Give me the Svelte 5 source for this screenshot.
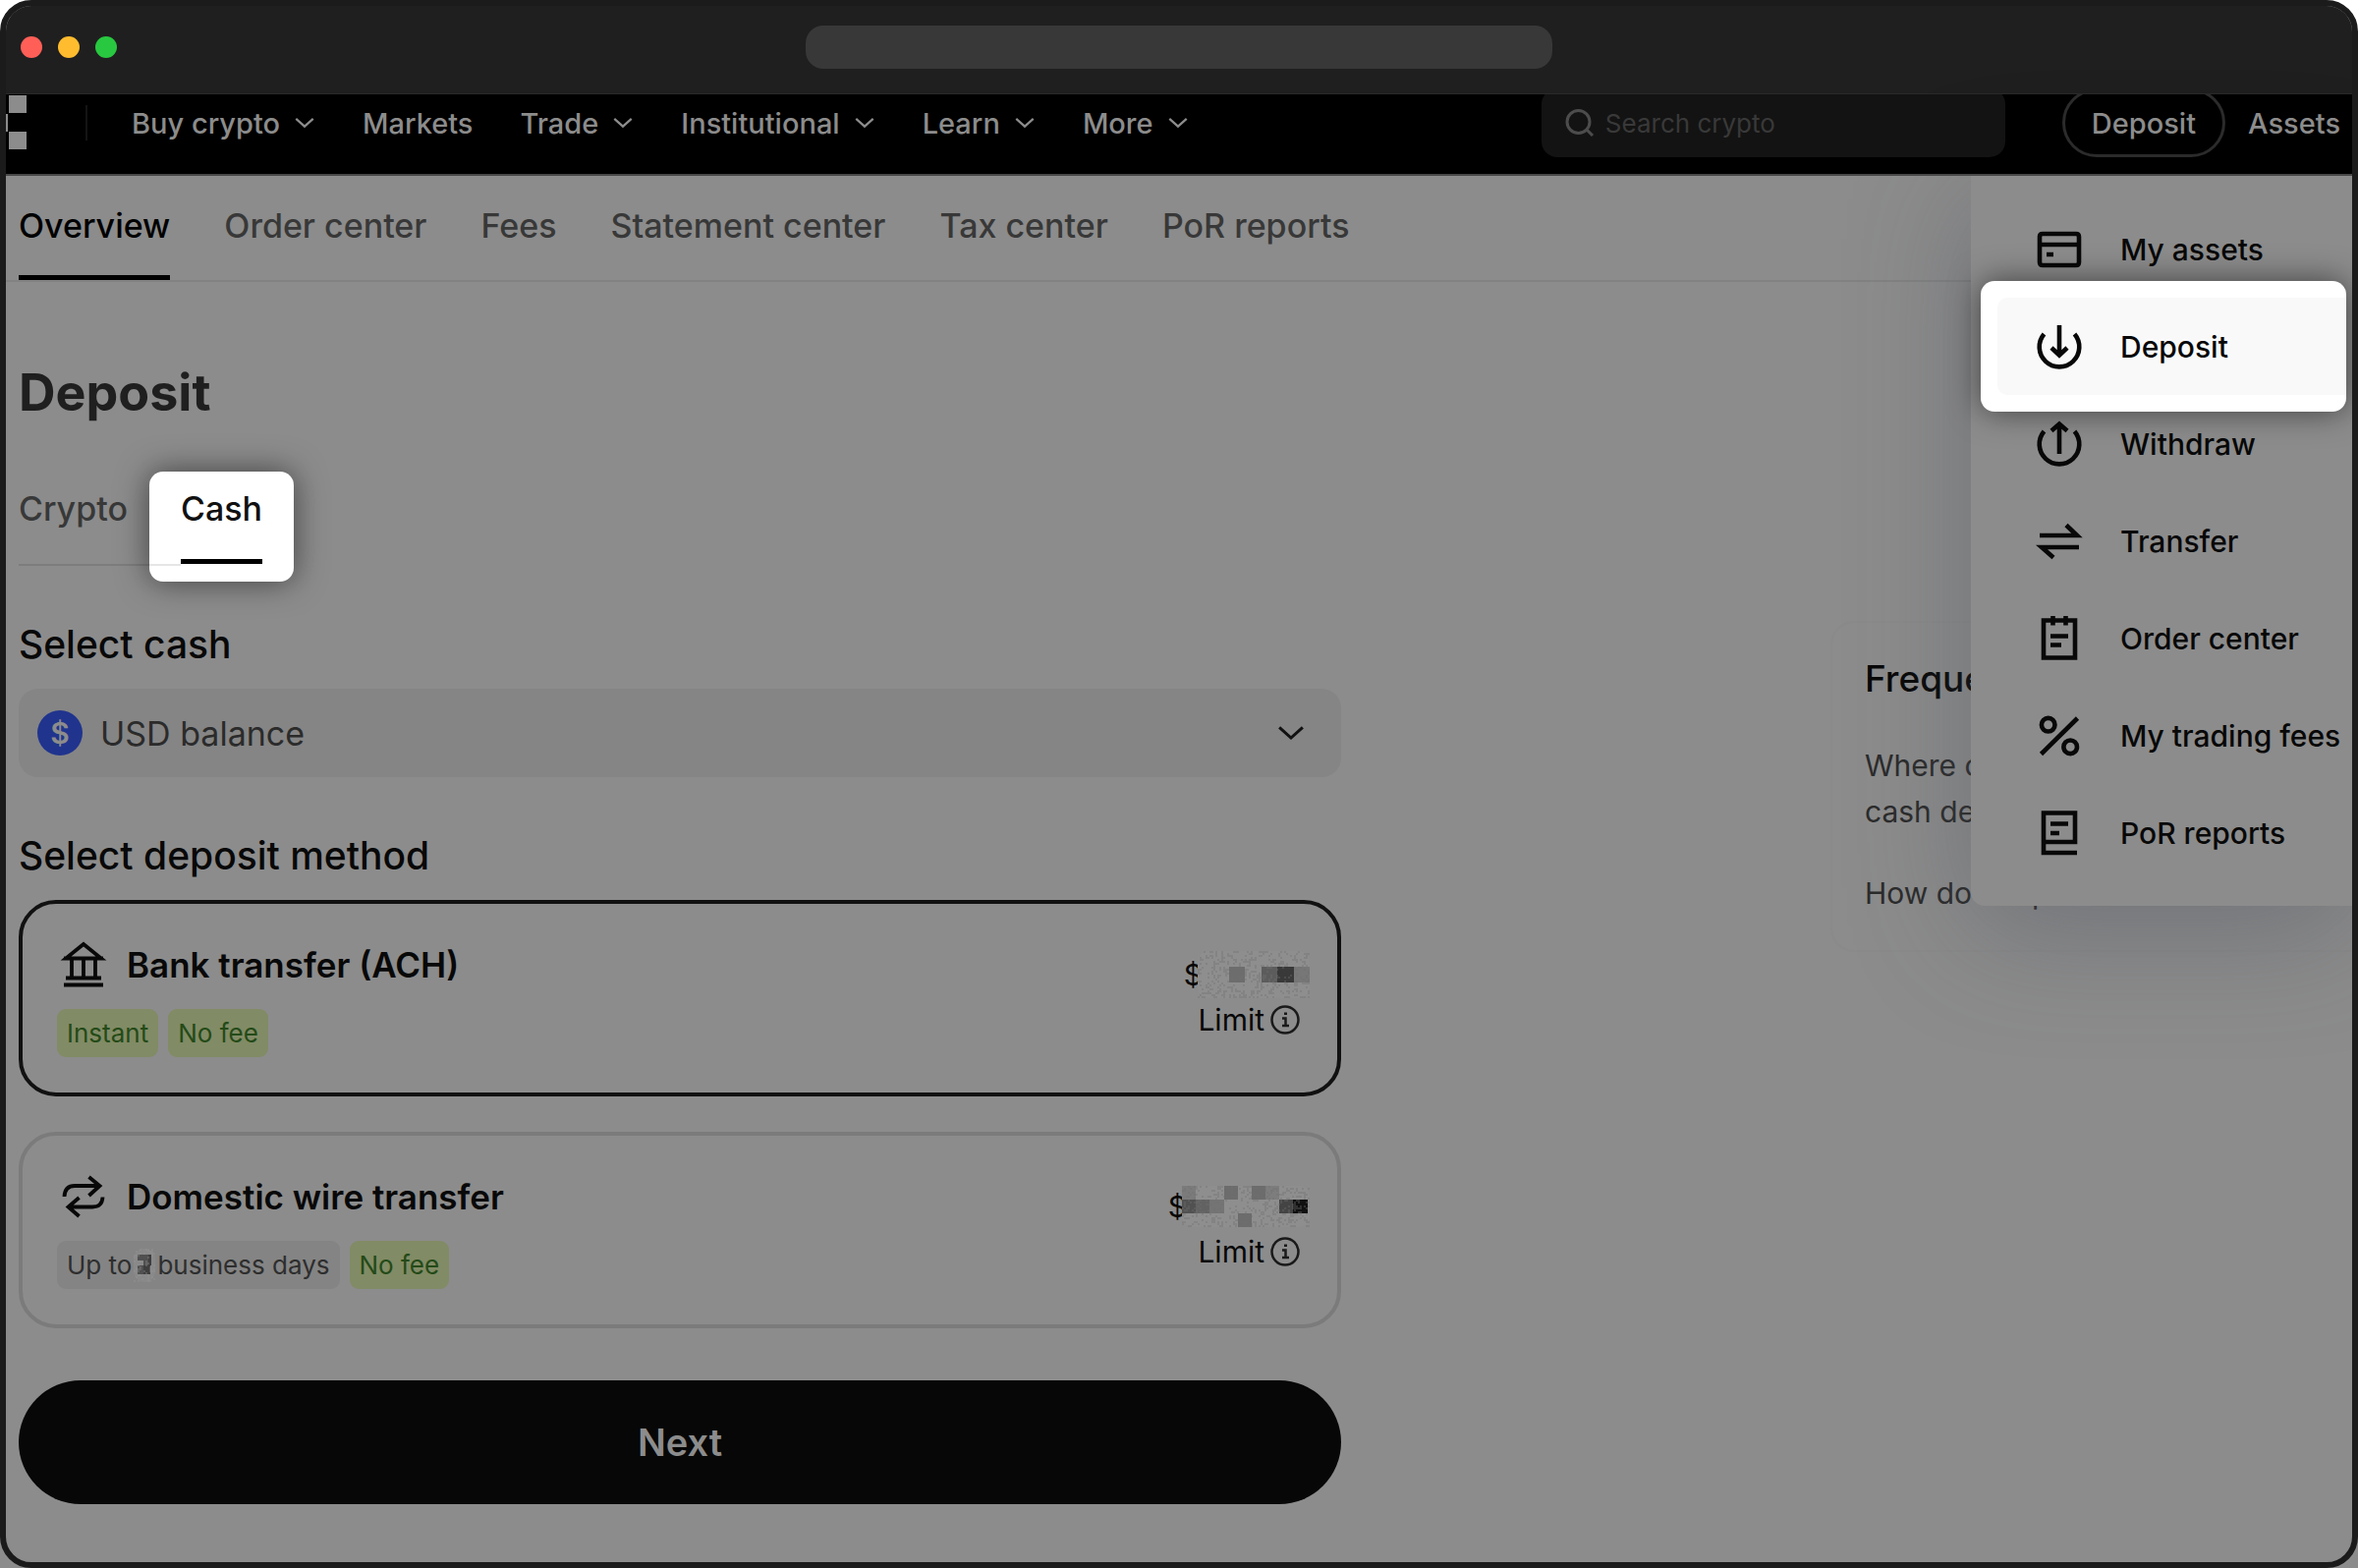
<script lang="ts">
  type NavItem = { label: string; menu: boolean };
  type Method = {
    id: string;
    title: string;
    icon: string;
    mosaic: Mosaic;
    tags: { before: string; after?: string; tone: "green" | "grey" }[];
  };
  type Mosaic = { width: number; height: number; blocks: [number, number, number, number, string][] };

  const navItems: NavItem[] = [
    { label: "Buy crypto", menu: true },
    { label: "Markets", menu: false },
    { label: "Trade", menu: true },
    { label: "Institutional", menu: true },
    { label: "Learn", menu: true },
    { label: "More", menu: true },
  ];

  const sections = ["Overview", "Order center", "Fees", "Statement center", "Tax center", "PoR reports"];

  const assetLinks = [
    { label: "My assets", icon: "M7 8H41Q44 8 44 11V37Q44 40 41 40H7Q4 40 4 37V11Q4 8 7 8ZM4 19H44M11 29H18" },
    { label: "Deposit", icon: "M8.5 11A20.3 20.3 0 1 0 39.5 11M24 2V32M16 25L24 32.5L32 25" },
    { label: "Withdraw", icon: "M8.5 11A20.3 20.3 0 1 0 39.5 11M24 34V4M16 10.5L24 3.5L32 10.5" },
    { label: "Transfer", icon: "M4 18H42L31 7.5M44 30H6L18 40.5" },
    { label: "Order center", icon: "M8 5.5H40V43.5H8ZM17.5 1V10.5M30.5 1V10.5M15 21.5H33M15 30.5H26" },
    { label: "My trading fees", icon: "M5.5 42.5L42.5 6M5.9 12.7A6.8 6.8 0 1 0 19.5 12.7A6.8 6.8 0 1 0 5.9 12.7ZM28.4 35.3A6.8 6.8 0 1 0 42 35.3A6.8 6.8 0 1 0 28.4 35.3Z" },
    { label: "PoR reports", icon: "M42 44H8V3.5H40V33H8M15 14.5H33M15 24H24" },
  ];

  const methods: Method[] = [
    {
      id: "ach",
      title: "Bank transfer (ACH)",
      icon: "M24 3L42 17.5H6ZM4 17.5H44M12 18V37M24 18V37M36 18V37M6 37.5H42M4 44.5H44",
      mosaic: {
        width: 114,
        height: 48,
        blocks: [
          [32, 16, 16, 16, "#6d6d6d"],
          [65, 16, 16, 16, "#5c5c5c"],
          [81, 16, 17, 16, "#393939"],
          [98, 16, 16, 16, "#777"],
        ],
      },
      tags: [
        { before: "Instant", tone: "green" },
        { before: "No fee", tone: "green" },
      ],
    },
    {
      id: "wire",
      title: "Domestic wire transfer",
      icon: "M4.5 24Q5 13 15 13H40M29.5 4L40.5 13L29.5 23M43.5 24.5Q43 34.5 33 34.5H9M19.5 25L8.5 34.5L19.5 44",
      mosaic: {
        width: 130,
        height: 42,
        blocks: [
          [0, 0, 14, 14, "#7b7b7b"],
          [43, 0, 14, 14, "#6c6c6c"],
          [71, 0, 14, 14, "#6c6c6c"],
          [85, 0, 14, 14, "#7d7d7d"],
          [0, 14, 14, 14, "#515151"],
          [14, 14, 14, 14, "#626262"],
          [28, 14, 15, 14, "#747474"],
          [99, 14, 14, 14, "#444"],
          [113, 14, 15, 14, "#101010"],
          [57, 28, 14, 14, "#6c6c6c"],
        ],
      },
      tags: [
        { before: "Up to", after: "business days", tone: "grey" },
        { before: "No fee", tone: "green" },
      ],
    },
  ];

  let selected = $state("ach");
  let currency = $state("USD balance");

  // grain over the hidden digits, same pattern on every render
  function grain(width: number, height: number): string {
    let seed = 7;
    let d = "";
    for (let y = 0; y < height; y += 2) {
      for (let x = 0; x < width; x += 2) {
        seed = (seed * 1103515245 + 12345) % 2147483648;
        if (seed / 2147483648 > 0.72) d += `M${x} ${y}h2v2h-2z`;
      }
    }
    return d;
  }
</script>

{#snippet chevron(size: number)}
  <svg class="chevron" width={size} height={size} viewBox="0 0 24 24" aria-hidden="true">
    <path d="M2.5 7.5L12 16L21.5 7.5" />
  </svg>
{/snippet}

{#snippet redacted(m: Mosaic)}
  <svg class="redacted" width={m.width} height={m.height} aria-hidden="true">
    <rect width={m.width} height={m.height} rx="10" fill="#8e8e8e" />
    {#each m.blocks as [x, y, w, h, fill]}
      <rect {x} {y} width={w} height={h} {fill} />
    {/each}
    <path d={grain(m.width, m.height)} fill="#707070" opacity="0.35" />
  </svg>
{/snippet}

<div class="window">
  <div class="titlebar">
    <div class="lights">
      <span class="light light--red"></span>
      <span class="light light--yellow"></span>
      <span class="light light--green"></span>
    </div>
    <div class="address"></div>
  </div>

  <header class="topbar">
    <div class="topbar__inner">
      <svg class="logo" width="21" height="56" viewBox="0 0 21 56" aria-hidden="true">
        <path d="M3 0H21V18H3ZM0 19H2V37H0ZM3 37H21V55H3Z" fill="#8c8c8c" />
      </svg>
      <span class="divider"></span>
      <nav class="nav">
        {#each navItems as item}
          <a class="nav__link" href="#top">
            {item.label}
            {#if item.menu}{@render chevron(22)}{/if}
          </a>
        {/each}
      </nav>
      <label class="search">
        <svg width="30" height="30" viewBox="0 0 30 30" aria-hidden="true">
          <path d="M2 14A11.5 11.5 0 1 0 25 14A11.5 11.5 0 1 0 2 14ZM22 22L28 28" />
        </svg>
        <input type="search" placeholder="Search crypto" aria-label="Search crypto" />
      </label>
      <button class="pill">Deposit</button>
      <a class="nav__link" href="#assets">Assets</a>
    </div>
  </header>

  <div class="page">
    <nav class="sections">
      {#each sections as section, i}
        <a class="sections__link" class:sections__link--active={i === 0} href="#section">{section}</a>
      {/each}
    </nav>

    <div class="content">
      <main class="form">
        <h1>Deposit</h1>
        <div class="tabs">
          <button class="tab">Crypto</button>
          <button class="tab tab--active">Cash</button>
        </div>

        <h2><label for="currency">Select cash</label></h2>
        <div class="picker">
          <span class="coin">$</span>
          <select id="currency" bind:value={currency}>
            <option>USD balance</option>
          </select>
          {@render chevron(30)}
        </div>

        <h2 id="method-title">Select deposit method</h2>
        <div class="methods" role="radiogroup" aria-labelledby="method-title">
          {#each methods as method}
            <label class="method" class:method--selected={selected === method.id}>
              <input type="radio" name="method" value={method.id} bind:group={selected} />
              <div class="method__info">
                <div class="method__title">
                  <svg class="icon" width="48" height="48" viewBox="0 0 48 48" aria-hidden="true">
                    <path d={method.icon} />
                  </svg>
                  {method.title}
                </div>
                <div class="tags">
                  {#each method.tags as tag}
                    <span class="tag tag--{tag.tone}">
                      {tag.before}
                      {#if tag.after}
                        <svg width="22" height="34" viewBox="0 0 22 34" aria-hidden="true">
                          <rect width="22" height="34" rx="11" fill="#898989" />
                          <path d="M4 6h12v6h-12zM10 12h6v5h-6zM4 17h6v9h-6z" fill="#505050" />
                          <path d="M10 17h7v9h-7zM15 6h3v11h-3z" fill="#3e3e3e" />
                          <path d={grain(22, 34)} fill="#999" opacity="0.3" />
                        </svg>
                        {tag.after}
                      {/if}
                    </span>
                  {/each}
                </div>
              </div>
              <div class="method__limit">
                <span class="amount">${@render redacted(method.mosaic)}</span>
                <span class="limit">
                  Limit
                  <svg width="32" height="32" viewBox="0 0 32 32" aria-hidden="true">
                    <circle cx="16" cy="16" r="13.5" />
                    <path d="M13 14.5H16.5V22M13 22H20M15 9.8H18" />
                  </svg>
                </span>
              </div>
            </label>
          {/each}
        </div>

        <button class="next">Next</button>
      </main>

      <aside class="faq">
        <h2>Frequently asked questions</h2>
        <p>Where can I find my<br />cash deposit?</p>
        <p>How do I deposit cash?</p>
      </aside>
    </div>

    <ul class="menu">
      {#each assetLinks as link}
        <li class="menu__item" class:menu__item--active={link.label === "Deposit"}>
          <a href="#assets">
            <svg class="icon" width="48" height="48" viewBox="0 0 48 48" aria-hidden="true">
              <path d={link.icon} />
            </svg>
            {link.label}
          </a>
        </li>
      {/each}
    </ul>
  </div>
</div>

<style>
  :global(body) {
    margin: 0;
    background: linear-gradient(#fff 50%, #8c8c8c 50%);
  }

  .window {
    --page: #8c8c8c;
    --text: #080808;
    --muted: #383838;
    box-sizing: border-box;
    display: flex;
    flex-direction: column;
    min-height: 100vh;
    overflow: hidden;
    border: 6px solid #1b1b1b;
    border-radius: 32px;
    background: var(--page);
    color: var(--text);
    font-family: Inter, "Liberation Sans", sans-serif;
  }

  a {
    color: inherit;
    text-decoration: none;
  }

  button,
  input,
  select {
    margin: 0;
    border: 0;
    background: none;
    color: inherit;
    font: inherit;
  }

  h1,
  h2,
  p,
  ul {
    margin: 0;
    padding: 0;
  }

  svg {
    flex: none;
    fill: none;
    stroke: none;
  }

  .chevron {
    stroke: currentColor;
    stroke-width: 2.4;
  }

  .icon {
    stroke: currentColor;
    stroke-width: 4.6;
  }

  .titlebar {
    box-sizing: border-box;
    display: grid;
    grid-template-columns: 1fr 760px 1fr;
    align-items: center;
    height: 90px;
    padding: 0 15px 6px;
    border-bottom: 1px solid #2a2a2a;
    background: #1f1f1f;
  }

  .lights {
    display: flex;
    gap: 16px;
  }

  .light {
    width: 22px;
    height: 22px;
    border-radius: 50%;
  }

  .light--red {
    background: #ff5f57;
  }

  .light--yellow {
    background: #febc2e;
  }

  .light--green {
    background: #28c840;
  }

  .address {
    height: 44px;
    border-radius: 18px;
    background: #383838;
  }

  .topbar {
    position: relative;
    z-index: 1;
    height: 81px;
    overflow: hidden;
    border-bottom: 2px solid #484848;
    background: #000;
    color: #8c8c8c;
    font-size: 29px;
    font-weight: 500;
  }

  .topbar__inner {
    display: flex;
    align-items: center;
    height: 70px;
    margin-top: -6px;
    padding-right: 12px;
  }

  .divider {
    width: 2px;
    height: 36px;
    margin: 0 45px 0 60px;
    background: #141414;
  }

  .nav {
    display: flex;
    flex: 1;
    gap: 48px;
  }

  .nav__link {
    display: flex;
    align-items: center;
    gap: 14px;
  }

  .search {
    box-sizing: border-box;
    display: flex;
    align-items: center;
    gap: 11px;
    width: 472px;
    height: 70px;
    margin-right: 58px;
    padding: 0 24px;
    border-radius: 16px;
    background: #131313;
  }

  .search svg {
    stroke: #4c4c4c;
    stroke-width: 3;
  }

  .search input {
    flex: 1;
    min-width: 0;
    padding: 0;
    font-size: 26px;
    font-weight: 400;
  }

  .search input::placeholder {
    color: #393939;
    opacity: 1;
  }

  .pill {
    height: 70px;
    margin-right: 23px;
    padding: 0 27px;
    border: 3px solid #2b2b2b;
    border-radius: 35px;
  }

  .page {
    position: relative;
    flex: 1;
  }

  .sections {
    display: flex;
    gap: 55px;
    height: 106px;
    padding-left: 13px;
    border-bottom: 2px solid #828282;
    color: var(--muted);
    font-size: 34px;
    font-weight: 500;
    line-height: 102px;
  }

  .sections__link--active {
    border-bottom: 5px solid #000;
    color: #000;
  }

  .content {
    display: grid;
    grid-template-columns: 1346fr 498fr 531fr;
    padding-left: 13px;
  }

  .form {
    padding-top: 81px;
  }

  h1 {
    color: #1f1f1f;
    font-size: 52px;
    font-weight: 700;
    line-height: 64px;
  }

  h2 {
    font-size: 39px;
    font-weight: 500;
    line-height: 48px;
  }

  .tabs {
    display: flex;
    gap: 54px;
    width: fit-content;
    margin: 64px 0 56px;
    border-bottom: 2px solid #7d7d7d;
  }

  .tab {
    padding: 0 0 34px;
    color: var(--muted);
    font-size: 34px;
    font-weight: 500;
    line-height: 44px;
  }

  .tab--active {
    position: relative;
    z-index: 1;
    color: #111;
  }

  /* spotlight behind the active tab, with the tab rule showing through */
  .tab--active::before {
    content: "";
    position: absolute;
    z-index: -1;
    inset: -16px -32px -18px;
    border-radius: 14px;
    background: linear-gradient(#e6e6e6, #e6e6e6) 0 94px / 32px 2px no-repeat #fff;
    box-shadow: 0 0 32px rgba(0, 0, 0, 0.55);
  }

  .tab--active::after {
    content: "";
    position: absolute;
    inset: auto 0 0;
    height: 5px;
    background: #000;
  }

  .picker {
    display: flex;
    align-items: center;
    height: 90px;
    margin: 21px 0 56px;
    padding: 0 36px 0 19px;
    border-radius: 20px;
    background: #858585;
  }

  .coin {
    width: 46px;
    margin-right: 18px;
    border-radius: 50%;
    background: #20348e;
    color: #8c8c8c;
    font-size: 30px;
    font-weight: 600;
    line-height: 46px;
    text-align: center;
  }

  .picker select {
    flex: 1;
    padding: 0;
    appearance: none;
    color: #2b2b2b;
    font-size: 34px;
  }

  .picker .chevron {
    color: #111;
  }

  .methods {
    display: grid;
    gap: 36px;
    margin: 21px 0 53px;
  }

  .method {
    display: flex;
    justify-content: space-between;
    padding: 38px 28px 36px 35px;
    border: 4px solid #7b7b7b;
    border-radius: 38px;
  }

  .method--selected {
    border-color: #111;
  }

  .method input {
    position: absolute;
    opacity: 0;
  }

  .method__title {
    display: flex;
    align-items: center;
    gap: 20px;
    padding-left: 3px;
    font-size: 35px;
    font-weight: 600;
  }

  .method__title .icon {
    stroke-width: 3.8;
  }

  .tags {
    display: flex;
    gap: 10px;
    margin-top: 21px;
  }

  .tag {
    display: flex;
    align-items: center;
    gap: 2px;
    height: 49px;
    padding: 0 10px;
    border-radius: 9px;
    font-size: 26px;
  }

  .tag--green {
    background: #818b65;
    color: #244a18;
  }

  .tag--grey {
    background: #848484;
    color: #2e2e2e;
  }

  .method__limit {
    display: flex;
    flex-direction: column;
    align-items: flex-end;
    margin-top: 10px;
    font-size: 30px;
  }

  .amount {
    display: flex;
    align-items: center;
    height: 48px;
  }

  /* the mosaic eats into the currency sign */
  .redacted {
    margin-left: -5px;
  }

  .limit {
    display: flex;
    align-items: center;
    gap: 5px;
    margin-right: 9px;
    line-height: 44px;
  }

  .limit svg {
    stroke: #1a1a1a;
    stroke-width: 2.5;
  }

  .next {
    width: 100%;
    height: 126px;
    border-radius: 63px;
    background: #070707;
    color: #8c8c8c;
    font-size: 38px;
    font-weight: 600;
  }

  .faq {
    grid-column: 3;
    align-self: start;
    margin-top: 345px;
    padding: 33px 0 34px 33px;
    border: 2px solid #8a8a8a;
    border-right: 0;
    border-radius: 24px 0 0 24px;
    color: #2b2b2b;
    font-size: 30px;
    line-height: 47px;
  }

  .faq h2 {
    margin-bottom: 41px;
    color: var(--text);
    font-size: 37px;
  }

  .faq p + p {
    margin-top: 36px;
  }

  .menu {
    position: absolute;
    top: 0;
    right: 0;
    box-sizing: border-box;
    width: 388px;
    padding: 25px 0;
    border-radius: 0 0 0 14px;
    background: var(--page);
    box-shadow: 0 24px 120px rgba(70, 76, 88, 0.4);
    font-size: 30px;
    font-weight: 500;
    list-style: none;
  }

  .menu__item a {
    display: flex;
    align-items: center;
    gap: 38px;
    height: 99px;
    margin-left: 27px;
    padding-left: 39px;
    border-radius: 10px;
    white-space: nowrap;
  }

  .menu__item--active {
    position: relative;
    margin: -17px 6px -17px 10px;
    padding: 17px 0;
    border-radius: 14px;
    background: #fff;
    box-shadow: 0 0 32px rgba(0, 0, 0, 0.55);
  }

  .menu__item--active a {
    margin-left: 17px;
    border-radius: 10px 0 0 10px;
    background: #f9f9f9;
  }
</style>
